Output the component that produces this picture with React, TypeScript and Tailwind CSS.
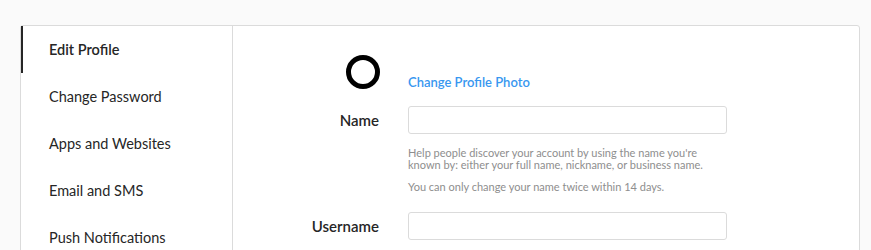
export default function App() {
  const menu = ['Edit Profile', 'Change Password', 'Apps and Websites', 'Email and SMS', 'Push Notifications']

  return (
    <div className="h-[250px] overflow-hidden bg-[#fafafa] pt-[25px] pl-[20px] pr-[11px] font-['Lato',sans-serif] text-[#262626]">
      <div className="flex h-[300px] rounded-[3px] border border-[#dbdbdb] bg-white">
        {/* Sidebar */}
        <ul className="w-[212px] shrink-0 border-r border-[#dbdbdb]">
          {menu.map((item, i) => (
            <li
              key={item}
              className={
                'flex h-[47px] items-center pl-[26px] text-[14.5px] ' +
                (i === 0 ? 'border-l-2 border-[#262626] font-semibold' : 'border-l-2 border-transparent')
              }
            >
              {item}
            </li>
          ))}
        </ul>

        {/* Form */}
        <div className="flex-1 pt-[29px]">
          <div className="flex items-end">
            <div className="flex w-[175px] justify-end pr-[28px]">
              <div className="h-[34px] w-[34px] rounded-full border-[5px] border-black" />
            </div>
            <button className="mb-[-3px] text-[13px] font-semibold text-[#3897f0]">Change Profile Photo</button>
          </div>

          <div className="mt-[17px] flex items-center">
            <label className="w-[175px] pr-[29px] text-right text-[15px] font-semibold">Name</label>
            <input className="h-[28px] w-[319px] rounded-[3px] border border-[#dbdbdb] px-[10px] text-sm outline-none" />
          </div>
          <div className="ml-[175px] mt-[13px] w-[320px] text-[11px] leading-[12px] text-[#8e8e8e]">
            <p>Help people discover your account by using the name you're known by: either your full name, nickname, or business name.</p>
            <p className="mt-[10px]">You can only change your name twice within 14 days.</p>
          </div>

          <div className="mt-[19px] flex items-center">
            <label className="w-[175px] pr-[29px] text-right text-[15px] font-semibold">Username</label>
            <input className="h-[28px] w-[319px] rounded-[3px] border border-[#dbdbdb] px-[10px] text-sm outline-none" />
          </div>
        </div>
      </div>
    </div>
  )
}
